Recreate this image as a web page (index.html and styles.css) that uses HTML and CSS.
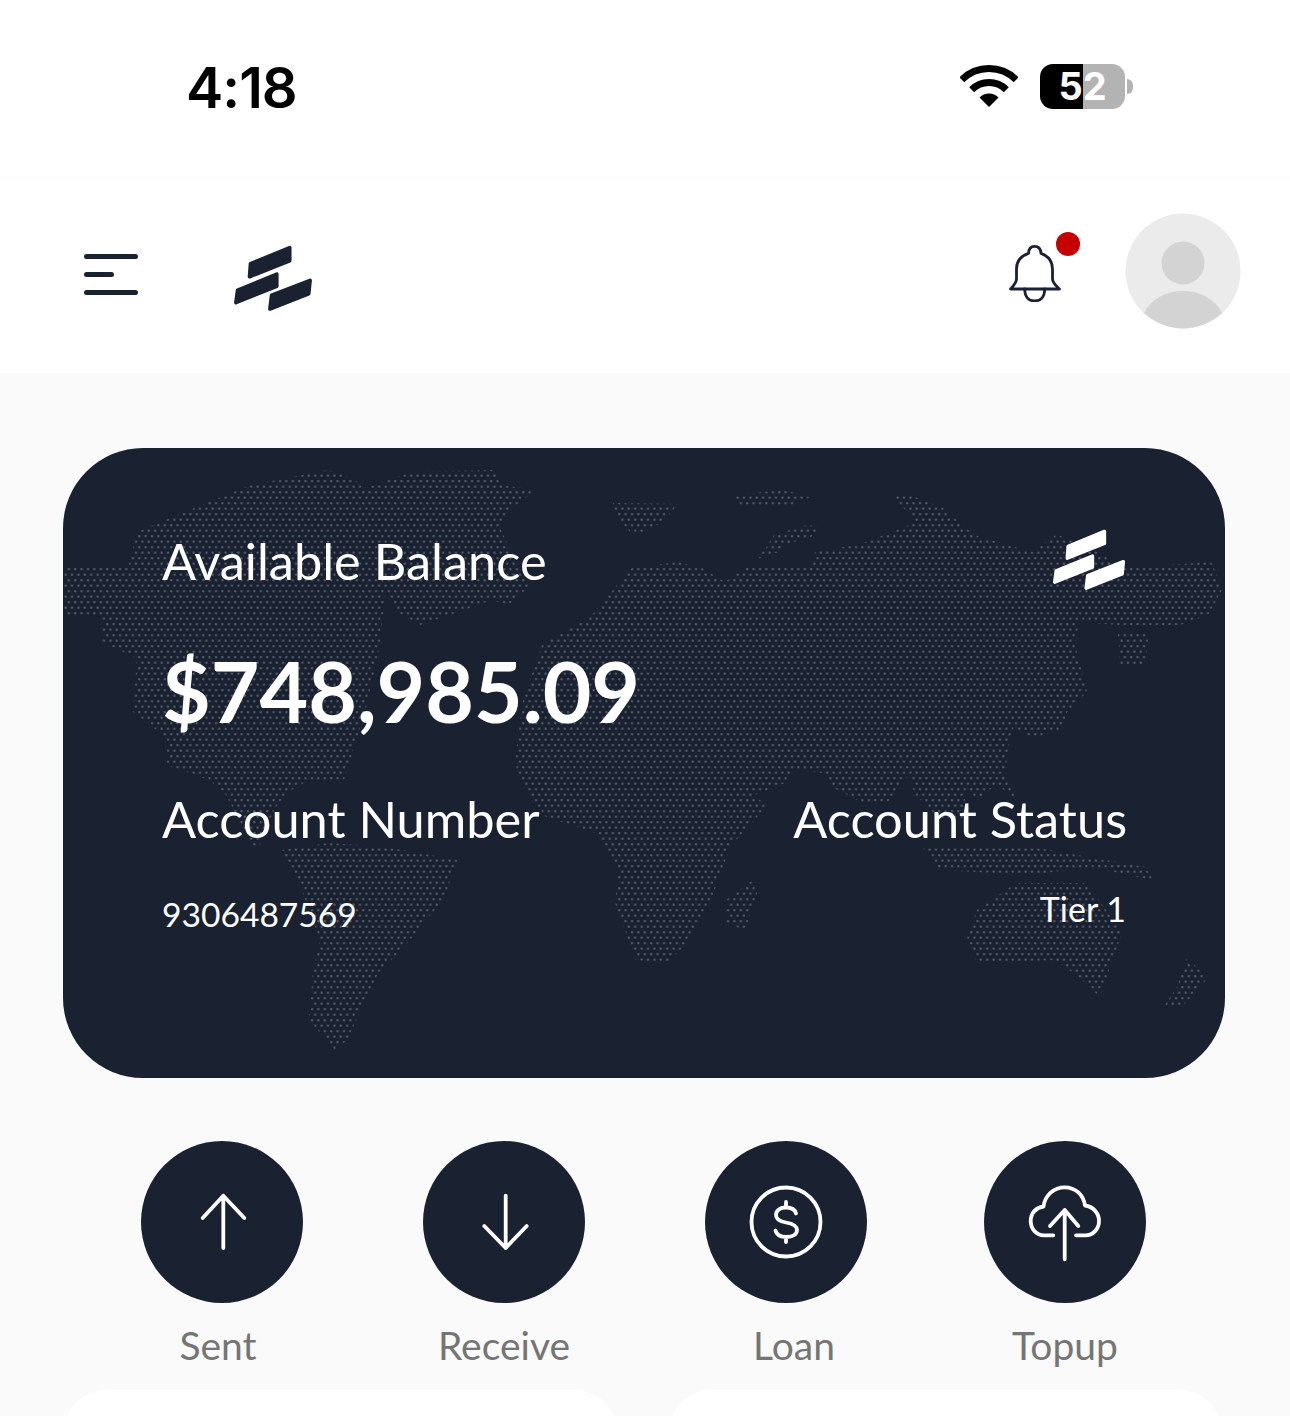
FILE: index.html
```html
<!DOCTYPE html>
<html lang="en">
<head>
  <meta charset="UTF-8">
  <meta name="viewport" content="width=device-width, initial-scale=1.0">
  <title>Wallet</title>
  <link rel="stylesheet" href="styles.css">
</head>
<body>
<svg class="defs" width="0" height="0">
  <symbol id="logo" viewBox="490 40 240 200">
    <g fill="currentColor" stroke="currentColor" stroke-width="11" stroke-linejoin="round">
      <polygon points="544,98 659,51 659,89 541,136"/>
      <polygon points="506,176 621,129 621,164 501,212"/>
      <polygon points="606,191 719,147 715,186 601,231"/>
    </g>
  </symbol>
</svg>

<div class="status-bar">
  <div class="time">4:18</div>
  <div class="status-icons">
    <svg class="wifi" viewBox="0 0 58 42">
      <g fill="none" stroke="#000" stroke-width="7">
        <path d="M1.8 14.8A38.5 38.5 0 0 1 56.2 14.8"/>
        <path d="M11.7 24.7A24.5 24.5 0 0 1 46.3 24.7"/>
      </g>
      <path d="M29 42L19.5 32.5A13.5 13.5 0 0 1 38.5 32.5Z" fill="#000"/>
    </svg>
    <div class="battery">52</div>
    <div class="battery-tip"></div>
  </div>
</div>

<header class="topbar">
  <div class="menu-btn">
    <span class="bar"></span>
    <span class="bar bar-short"></span>
    <span class="bar"></span>
  </div>
  <svg class="logo-dark"><use href="#logo"/></svg>
  <div class="topbar-right">
    <div class="bell">
      <svg class="bell-icon" viewBox="0 0 52 57" fill="none" stroke="#1a2130" stroke-width="2.8" stroke-linejoin="round" stroke-linecap="round">
        <path d="M25.7 1.4C22.2 1.4 19.7 3.9 19.5 8.4C12 10.9 7.5 16 7.5 24V34C7.5 38 4 41 1.5 44H50.5C47.5 41 43.5 38 43.5 34V24C43.5 16 39 10.9 32 8.4C31.7 3.9 29.2 1.4 25.7 1.4Z"/>
        <path d="M15.7 44C15.7 52 20 56 25.7 56C31.4 56 35.7 52 35.7 44"/>
      </svg>
      <span class="bell-dot"></span>
    </div>
    <svg class="avatar" viewBox="0 0 116 116">
      <circle cx="58" cy="58" r="57.5" fill="#ebebeb"/>
      <circle cx="58" cy="50" r="21.5" fill="#d3d3d3"/>
      <path d="M19 100C26 86 41 78 58 78C75 78 90 86 97 100C87 109 73 115.500 58 115.500C43 115.500 29 109 19 100Z" fill="#d3d3d3"/>
    </svg>
  </div>
</header>

<main class="content">
  <section class="card">
    <svg class="card-map" viewBox="63 448 1162 630">
      <defs>
        <pattern id="dots" x="0" y="0" width="6.4" height="11" patternUnits="userSpaceOnUse">
          <circle cx="1.6" cy="2.75" r="1.15"/>
          <circle cx="4.8" cy="8.25" r="1.15"/>
        </pattern>
      </defs>
      <g fill="url(#dots)">
        <!-- north america -->
        <polygon points="64,568 129,565 137,532 182,513 251,485 328,470 351,478 366,488 412,472 496,470 500,485 536,490 512,508 500,528 508,545 531,585 508,605 492,600 458,612 420,625 397,612 385,592 380,645 366,708 343,783 309,780 286,793 274,810 259,847 253,847 225,793 209,780 167,765 167,738 133,712 137,658 102,642 102,615 64,615"/>
        <!-- south america -->
        <polygon points="282,850 328,843 385,847 458,860 443,900 404,947 378,973 347,1040 335,1050 309,1020 313,973 320,940 297,877"/>
        <!-- greenland and the arctic islands -->
        <polygon points="613,503 678,504 663,522 643,532 630,532 613,512"/>
        <polygon points="733,495 783,490 810,497 787,507 741,505"/>
        <polygon points="774,535 807,525 820,527 811,537 783,545 779,552 754,560 766,548"/>
        <!-- africa and eurasia -->
        <polygon points="515,760 523,700 542,645 592,615 623,578 632,568 678,562 702,568 725,582 745,568 811,568 815,552 857,545 892,532 916,522 892,495 910,495 943,508 974,535 1032,552 1056,535 1075,540 1126,568 1211,562 1223,588 1208,615 1180,625 1120,625 1079,622 1075,645 1087,692 1067,712 1063,728 1034,738 1013,728 1009,745 1005,772 1016,800 996,783 980,800 965,790 965,820 941,820 914,793 910,773 887,803 863,803 832,787 824,773 793,770 785,783 749,797 769,803 757,817 730,847 710,903 687,943 667,963 636,960 626,933 615,903 619,870 603,843 596,833 546,817 519,780"/>
        <!-- islands and australia -->
        <polygon points="1118,632 1149,632 1145,665 1120,665"/>
        <polygon points="753,880 757,893 745,930 726,923 726,900"/>
        <polygon points="922,847 1032,847 1145,867 1153,880 1090,867 1030,875 940,870"/>
        <polygon points="1016,883 1087,883 1122,933 1110,967 1100,997 1079,977 1055,960 977,963 967,937 977,910"/>
        <polygon points="1187,958 1208,978 1181,1008 1163,1008 1177,987"/>
      </g>
    </svg>
    <div class="card-top">
      <div class="card-label">Available Balance</div>
      <svg class="logo-light"><use href="#logo"/></svg>
    </div>
    <div class="amount">$748,985.09</div>
    <div class="card-row">
      <div class="card-label">Account Number</div>
      <div class="card-label">Account Status</div>
    </div>
    <div class="card-values">
      <div class="acc-number">9306487569</div>
      <div class="acc-tier">Tier 1</div>
    </div>
  </section>

  <section class="actions">
    <div class="action action-sent">
      <div class="action-circle">
        <svg viewBox="0 0 162 162"><path d="M82.300 54.700V107M61.700 77L82.300 54.700L103.300 77"/></svg>
      </div>
      <div class="action-label">Sent</div>
    </div>
    <div class="action">
      <div class="action-circle">
        <svg viewBox="0 0 162 162"><path d="M82.700 54.700V107M61.300 85L82.700 107L103.700 85"/></svg>
      </div>
      <div class="action-label">Receive</div>
    </div>
    <div class="action action-loan">
      <div class="action-circle">
        <svg viewBox="0 0 162 162">
          <circle cx="81" cy="81" r="34.500"/>
          <path d="M91 72.500C90 68.500 86 66.500 81 66.500C75 66.500 71 69.500 71 74C71 79 75 80.500 81 81.500C87 82.500 92 84 92 89C92 93.500 87.500 96 81.500 96C76 96 71.500 94 70.500 89.500M81 61V66.500M81 96V101"/>
        </svg>
      </div>
      <div class="action-label">Loan</div>
    </div>
    <div class="action">
      <div class="action-circle">
        <svg viewBox="0 0 162 162">
          <path d="M69.300 94.300H60C52 94.300 46.700 87.500 46.700 80C46.700 72 52 66.500 59.500 65.500C61 54 70 46.300 80.700 46.300C91.500 46.300 99.500 54 101 64.500C109 65.500 115 72 115 80C115 88 109 94.300 102 94.300H92"/>
          <path d="M80.700 69V118.300M66 85L80.700 69L94.300 85"/>
        </svg>
      </div>
      <div class="action-label">Topup</div>
    </div>
  </section>

  <section class="bottom-cards">
    <div class="mini-card"></div>
    <div class="mini-card"></div>
  </section>
</main>
</body>
</html>
```

FILE: styles.css
```css
* {
  box-sizing: border-box;
}
html, body {
  margin: 0;
  padding: 0;
  height: 1416px;
  overflow: hidden;
}
body {
  font-family: Lato, "Open Sans", sans-serif;
  background-color: #fafafa;
}
.defs {
  display: block;
  height: 0;
}
.status-bar {
  height: 178px;
  padding: 0 157px 0 186px;
  display: flex;
  justify-content: space-between;
  align-items: center;
  background-color: #fff;
  border-bottom: 1px solid #f6f6f6;
}
.time {
  font-family: Inter, sans-serif;
  font-size: 56px;
  font-weight: 600;
  color: #000;
  letter-spacing: -1px;
  margin-bottom: 2px;
}
.status-icons {
  display: flex;
  align-items: center;
  margin-bottom: 5px;
}
.wifi {
  width: 58px;
  height: 42px;
  margin-right: 22px;
}
.battery {
  width: 85px;
  height: 45px;
  border-radius: 13px;
  background: linear-gradient(to right, #000 51%, #b3b3b3 51%);
  color: #fff;
  font-family: Inter, sans-serif;
  font-size: 38px;
  font-weight: 700;
  line-height: 45px;
  text-align: center;
}
.battery-tip {
  width: 6px;
  height: 15px;
  margin-left: 2px;
  background-color: #b3b3b3;
  border-radius: 0 6px 6px 0;
}
.topbar {
  height: 195px;
  background-color: #fff;
  display: flex;
  align-items: center;
  padding: 0 49px 0 84px;
}
.menu-btn {
  width: 54px;
  display: flex;
  flex-direction: column;
  gap: 13px;
  margin-top: -3px;
}
.bar {
  display: block;
  height: 5px;
  width: 54px;
  background-color: #1a2130;
  border-radius: 3px;
}
.bar-short {
  width: 30px;
}
.logo-dark {
  width: 82px;
  height: 68px;
  color: #1a2130;
  margin-left: 94px;
  margin-top: 4px;
}
.topbar-right {
  margin-left: auto;
  display: flex;
  align-items: center;
}
.bell {
  position: relative;
  width: 52px;
  height: 57px;
  margin-right: 64px;
  margin-top: -4px;
}
.bell-icon {
  display: block;
  width: 52px;
  height: 57px;
}
.bell-dot {
  position: absolute;
  left: 47px;
  top: -13px;
  width: 24px;
  height: 24px;
  border-radius: 50%;
  background-color: #c40000;
}
.avatar {
  display: block;
  width: 116px;
  height: 116px;
  margin-top: -9px;
}
.content {
  padding: 75px 65px 0 63px;
}
.card {
  position: relative;
  height: 630px;
  padding: 83px 99px 0;
  background-color: #1a2130;
  border-radius: 80px;
  overflow: hidden;
  color: #fff;
}
.card-map {
  position: absolute;
  left: 0;
  top: 0;
  width: 100%;
  height: 100%;
}
#dots {
  fill: #565e6d;
}
.card-top, .card-row, .card-values, .amount {
  position: relative;
}
.card-top {
  display: flex;
  justify-content: space-between;
  align-items: center;
  height: 60px;
}
.card-label {
  font-size: 50.5px;
  line-height: 60px;
  font-weight: 400;
}
.logo-light {
  width: 76px;
  height: 63px;
  color: #fff;
  margin-right: -1px;
  margin-top: -3px;
  flex-shrink: 0;
}
.amount {
  font-size: 84px;
  font-weight: 700;
  line-height: 100px;
  margin-top: 50px;
}
.card-row {
  display: flex;
  justify-content: space-between;
  margin-top: 48px;
  margin-right: -1px;
}
.card-values {
  display: flex;
  justify-content: space-between;
  font-size: 33.6px;
  line-height: 44px;
  margin-top: 43px;
}
.acc-tier {
  font-size: 34px;
  margin-top: -5px;
}
.actions {
  display: flex;
  padding-left: 78px;
  margin-top: 63px;
}
.action {
  width: 162px;
  margin-right: 120px;
  display: flex;
  flex-direction: column;
  align-items: center;
}
.action-loan {
  margin-right: 117px;
}
.action-circle {
  width: 162px;
  height: 162px;
  border-radius: 50%;
  background-color: #1a2130;
}
.action-circle svg {
  display: block;
  width: 162px;
  height: 162px;
  fill: none;
  stroke: #fff;
  stroke-width: 3.8;
  stroke-linecap: round;
  stroke-linejoin: round;
}
.action-label {
  margin-top: 19px;
  font-size: 39px;
  line-height: 46px;
  color: #757575;
  white-space: nowrap;
}
.action-sent .action-label {
  margin-right: 8px;
}
.action-loan .action-label {
  margin-left: 16px;
}
.bottom-cards {
  display: flex;
  gap: 50px;
  height: 26px;
  overflow: hidden;
  margin-top: 22px;
}
.mini-card {
  width: 555px;
  height: 200px;
  flex-shrink: 0;
  background-color: #fff;
  border-radius: 44px;
}
```
